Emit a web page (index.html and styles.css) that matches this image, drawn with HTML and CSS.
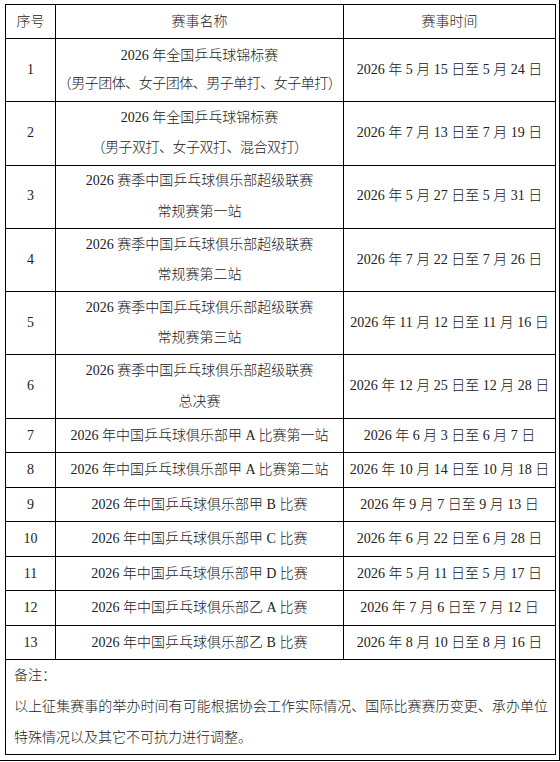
FILE: index.html
```html
<!DOCTYPE html>
<html lang="zh-CN">
<head>
<meta charset="utf-8">
<title>赛事征集</title>
<link rel="stylesheet" href="styles.css">
</head>
<body>
<div class="page">
  <table class="schedule">
    <colgroup>
      <col class="c-no">
      <col class="c-name">
      <col class="c-time">
    </colgroup>
    <thead>
      <tr class="r-head"><th>序号</th><th>赛事名称</th><th>赛事时间</th></tr>
    </thead>
    <tbody>
      <tr class="r2 compact"><td>1</td><td>2026 年全国乒乓球锦标赛<br><span class="tight">（男子团体、女子团体、男子单打、女子单打）</span></td><td>2026 年 5 月 15 日至 5 月 24 日</td></tr>
      <tr class="r2"><td>2</td><td>2026 年全国乒乓球锦标赛<br><span class="tight">（男子双打、女子双打、混合双打）</span></td><td>2026 年 7 月 13 日至 7 月 19 日</td></tr>
      <tr class="r2"><td>3</td><td>2026 赛季中国乒乓球俱乐部超级联赛<br>常规赛第一站</td><td>2026 年 5 月 27 日至 5 月 31 日</td></tr>
      <tr class="r2"><td>4</td><td>2026 赛季中国乒乓球俱乐部超级联赛<br>常规赛第二站</td><td>2026 年 7 月 22 日至 7 月 26 日</td></tr>
      <tr class="r2"><td>5</td><td>2026 赛季中国乒乓球俱乐部超级联赛<br>常规赛第三站</td><td>2026 年 11 月 12 日至 11 月 16 日</td></tr>
      <tr class="r2"><td>6</td><td>2026 赛季中国乒乓球俱乐部超级联赛<br>总决赛</td><td>2026 年 12 月 25 日至 12 月 28 日</td></tr>
      <tr class="r1"><td>7</td><td>2026 年中国乒乓球俱乐部甲 A 比赛第一站</td><td>2026 年 6 月 3 日至 6 月 7 日</td></tr>
      <tr class="r1"><td>8</td><td>2026 年中国乒乓球俱乐部甲 A 比赛第二站</td><td>2026 年 10 月 14 日至 10 月 18 日</td></tr>
      <tr class="r1"><td>9</td><td>2026 年中国乒乓球俱乐部甲 B 比赛</td><td>2026 年 9 月 7 日至 9 月 13 日</td></tr>
      <tr class="r1"><td>10</td><td>2026 年中国乒乓球俱乐部甲 C 比赛</td><td>2026 年 6 月 22 日至 6 月 28 日</td></tr>
      <tr class="r1"><td>11</td><td>2026 年中国乒乓球俱乐部甲 D 比赛</td><td>2026 年 5 月 11 日至 5 月 17 日</td></tr>
      <tr class="r1"><td>12</td><td>2026 年中国乒乓球俱乐部乙 A 比赛</td><td>2026 年 7 月 6 日至 7 月 12 日</td></tr>
      <tr class="r1"><td>13</td><td>2026 年中国乒乓球俱乐部乙 B 比赛</td><td>2026 年 8 月 10 日至 8 月 16 日</td></tr>
    </tbody>
    <tfoot>
      <tr class="r-note">
        <td colspan="3">
          <p class="note-title">备注：</p>
          <p class="note-text">以上征集赛事的举办时间有可能根据协会工作实际情况、国际比赛赛历变更、承办单位特殊情况以及其它不可抗力进行调整。</p>
        </td>
      </tr>
    </tfoot>
  </table>
</div>
</body>
</html>
```

FILE: styles.css
```css
html, body {
  margin: 0;
  padding: 0;
  background: #fff;
}

.page {
  width: 560px;
  height: 761px;
  box-sizing: border-box;
  padding: 4px 0 0 5px;
  border-right: 1px solid #000;
  border-bottom: 1px solid #000;
}

.schedule {
  width: 550px;
  border-collapse: collapse;
  table-layout: fixed;
  font-family: "Liberation Serif", "Noto Sans CJK SC", serif;
  font-size: 14px;
  font-weight: 300;
  line-height: 28px;
  color: #222;
}

.c-no { width: 50px; }
.c-name { width: 288px; }
.c-time { width: 212px; }

.schedule th,
.schedule td {
  border: 1px solid #000;
  padding: 0;
  text-align: center;
  vertical-align: middle;
  white-space: nowrap;
  font-weight: 300;
}

.r-head { height: 34px; }
.r2 { height: 63.3px; line-height: 30.5px; }
.r2.compact { line-height: 28px; }
.r1 { height: 34.5px; }
.r-note { height: 95px; }

.tight { letter-spacing: -0.5px; }

.r-note td {
  text-align: left;
  vertical-align: top;
  white-space: normal;
  padding: 0 7px 0 8px;
  line-height: 31px;
}

.note-title,
.note-text {
  margin: 0;
}

.note-text {
  text-align: justify;
}
```
